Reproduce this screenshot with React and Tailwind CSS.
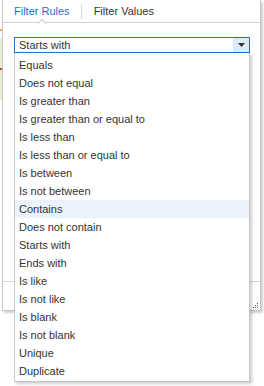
const items = [
  "Equals",
  "Does not equal",
  "Is greater than",
  "Is greater than or equal to",
  "Is less than",
  "Is less than or equal to",
  "Is between",
  "Is not between",
  "Contains",
  "Does not contain",
  "Starts with",
  "Ends with",
  "Is like",
  "Is not like",
  "Is blank",
  "Is not blank",
  "Unique",
  "Duplicate",
];

export default function App() {
  return (
    <div className="relative w-[264px] h-[386px] overflow-hidden bg-white flex font-['Liberation_Sans',Arial,sans-serif] text-[11px] text-[#333]">
      <div className="w-[2px] flex flex-col shrink-0">
        <div className="h-[29px]" />
        <div className="h-[2px] bg-[#f2a24a]" />
        <div className="h-[7px]" />
        <div className="h-[30px] bg-[#e6f0d6]" />
        <div className="h-[2px] bg-[#b04a3a]" />
        <div className="h-[30px] bg-[#e6f0d6]" />
      </div>
      <div className="w-[259px] h-[311px] shrink-0 border-x border-b border-[#c4c4c4] shadow-[2px_2px_2px_rgba(0,0,0,0.18)] flex flex-col bg-white">
        <div className="relative h-[23px] shrink-0 border-b border-[#d2d2d2] flex items-center">
          <div className="pl-[11px] pr-[11px] text-[#1f6fc2]">Filter Rules</div>
          <div className="w-px h-[15px] bg-[#d9d9d9]" />
          <div className="pl-[12px]">Filter Values</div>
          <div className="absolute left-[36px] bottom-[-4px] w-[6px] h-[6px] rotate-45 bg-white border-t border-l border-[#c8c8c8]" />
        </div>
        <div className="h-[259px] shrink-0 border-b border-[#d8d8d8] pt-[14px] pl-[11px]">
          <div className="w-[236px] h-[16px] border border-[#2a6fc0] flex bg-white">
            <div className="flex-1 pl-[4px] leading-[14px]">Starts with</div>
            <div className="w-[16px] bg-[#dde9f6] flex items-center justify-center">
              <svg width="7" height="4" viewBox="0 0 7 4">
                <path d="M0 0H7L3.5 4Z" fill="#333" />
              </svg>
            </div>
          </div>
        </div>
        <div className="relative h-[28px] shrink-0">
          <svg className="absolute right-[1px] bottom-[1px]" width="6" height="6" viewBox="0 0 6 6">
            <rect x="4" y="0" width="1" height="1" fill="#555" />
            <rect x="2" y="2" width="1" height="1" fill="#555" />
            <rect x="4" y="2" width="1" height="1" fill="#555" />
            <rect x="0" y="4" width="1" height="1" fill="#555" />
            <rect x="2" y="4" width="1" height="1" fill="#555" />
            <rect x="4" y="4" width="1" height="1" fill="#555" />
          </svg>
        </div>
      </div>
      <div className="absolute left-[14px] top-[53px] w-[236px] border-x border-b border-[#c6c6c6] bg-white pt-[3px] pb-[1px] shadow-[2px_2px_3px_rgba(0,0,0,0.2)]">
        {items.map((it) => (
          <div
            key={it}
            className={
              it === "Contains"
                ? "h-[18px] leading-[18px] pl-[4px] bg-[#eaf2fb]"
                : "h-[18px] leading-[18px] pl-[4px]"
            }
          >
            {it}
          </div>
        ))}
      </div>
    </div>
  );
}
